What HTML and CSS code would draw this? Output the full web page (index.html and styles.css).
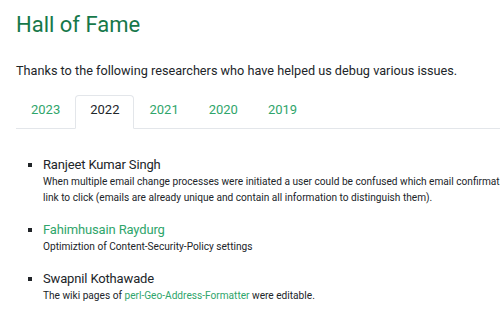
FILE: index.html
```html
<!DOCTYPE html>
<html lang="en">
<head>
  <meta charset="UTF-8" />
  <title>Hall of Fame</title>
  <link rel="stylesheet" href="styles.css">
</head>
<body>
  <div class="content">
    <h1>Hall of Fame</h1>
    <p class="intro">Thanks to the following researchers who have helped us debug various issues.</p>

    <ul class="tabs">
      <li><a href="#">2023</a></li>
      <li class="active"><a href="#">2022</a></li>
      <li><a href="#">2021</a></li>
      <li><a href="#">2020</a></li>
      <li><a href="#">2019</a></li>
    </ul>

    <ul class="researchers">
      <li>
        <div class="name">Ranjeet Kumar Singh</div>
        <div class="desc">When multiple email change processes were initiated a user could be confused which email confirmation link to click (emails are already unique and contain all information to distinguish them).</div>
      </li>
      <li>
        <div class="name"><a href="#">Fahimhusain Raydurg</a></div>
        <div class="desc">Optimiztion of Content-Security-Policy settings</div>
      </li>
      <li>
        <div class="name">Swapnil Kothawade</div>
        <div class="desc">The wiki pages of <a href="#">perl-Geo-Address-Formatter</a> were editable.</div>
      </li>
    </ul>
  </div>
</body>
</html>
```

FILE: styles.css
```css
html, body {
  overflow: hidden;
}
body {
  margin: 0;
  font-family: Roboto, sans-serif;
  color: #212529;
  background-color: #fff;
}
a {
  color: #2fa56b;
  text-decoration: none;
}
.content {
  width: 506px;
  padding: 0 0 0 16px;
}
h1 {
  font-size: 22px;
  font-weight: 400;
  color: #16784a;
  margin: 12px 0 0;
  line-height: 26px;
}
.intro {
  font-size: 12.7px;
  margin: 24px 0 0;
  line-height: 18px;
}
.tabs {
  list-style: none;
  display: flex;
  margin: 15px 0 0;
  padding: 0;
  border-bottom: 1px solid #e3e6ea;
}
.tabs li {
  margin-bottom: -1px;
}
.tabs a {
  display: block;
  padding: 5px 14px 10px;
  font-size: 13px;
  line-height: 17px;
  border: 1px solid transparent;
  border-radius: 4px 4px 0 0;
}
.tabs .active a {
  color: #212529;
  border-color: #e3e6ea #e3e6ea #fff;
  background-color: #fff;
}
.researchers {
  list-style: square;
  margin: 27px 0 0;
  padding-left: 27px;
}
.researchers li {
  font-size: 13px;
  line-height: 17px;
  margin-bottom: 15px;
}
.name {
  font-size: 13px;
  line-height: 17px;
  letter-spacing: -0.15px;
}
.desc {
  font-size: 10.15px;
  line-height: 16px;
  margin-top: 1px;
}
```
